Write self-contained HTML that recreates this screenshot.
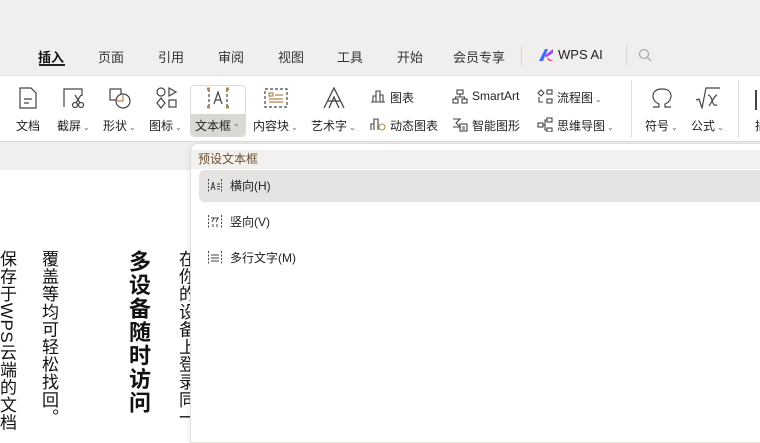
<!DOCTYPE html>
<html><head><meta charset="utf-8"><style>
*{margin:0;padding:0;box-sizing:border-box}
body{width:760px;height:437px;overflow:hidden;position:relative;background:#fff;font-family:"Liberation Sans","Noto Sans CJK SC",sans-serif;color:#222;font-size:12px}
.top{position:absolute;left:0;top:0;width:760px;height:75px;background:#f0efed}
.tab{position:absolute;top:47px;font-size:13px;color:#333}
.ribbon{position:absolute;left:0;top:75px;width:760px;height:67px;background:#fff;border-top:1px solid #e2e1de;border-bottom:1px solid #dcdbd8}
.band{position:absolute;left:0;top:142px;width:760px;height:28px;background:#f0efed}
.lbl{position:absolute;top:117px;font-size:12px;color:#222;white-space:nowrap}
.sm{position:absolute;font-size:12px;white-space:nowrap}
.car{font-size:8px;color:#666;margin-left:2px}
svg{position:absolute}
.v{position:absolute;top:250px;writing-mode:vertical-rl;font-size:17px;line-height:19px;color:#111;white-space:nowrap;letter-spacing:0.6px}
.dd{position:absolute;left:190px;top:143px;width:580px;height:300px;background:#fff;border:1px solid #e0dfdc;border-radius:8px 0 0 0;box-shadow:0 2px 6px rgba(0,0,0,.1)}
.hd{position:absolute;left:0;top:6px;width:100%;height:19px;background:#f2f1ef;font-size:12px;color:#6b4f2e;padding-left:7px;line-height:19px}
.row{position:absolute;left:8px;width:580px;height:32px;border-radius:6px;font-size:12px;line-height:32px;padding-left:31px}
.row svg{left:8px;top:8px}
</style></head><body>
<div class="top"></div>
<div class="tab" style="left:38px;font-weight:bold;color:#111">插入</div>
<div style="position:absolute;left:39px;top:64px;width:26px;height:2px;background:#222"></div>
<div class="tab" style="left:98px">页面</div>
<div class="tab" style="left:158px">引用</div>
<div class="tab" style="left:218px">审阅</div>
<div class="tab" style="left:278px">视图</div>
<div class="tab" style="left:337px">工具</div>
<div class="tab" style="left:397px">开始</div>
<div class="tab" style="left:453px">会员专享</div>
<div style="position:absolute;left:521px;top:47px;width:1px;height:18px;background:#d8d6d2"></div>
<svg style="left:538px;top:48px" width="16" height="14"><path d="M1 13 L7 1 L10 1 L5 13Z" fill="#3b6cf6"/><path d="M6 8 L15 1 L15 5 L9 9Z" fill="#a04ef0"/><path d="M8 9 L15 13 L11 13Z" fill="#f04a7a"/></svg>
<div class="tab" style="left:558px;color:#222">WPS AI</div>
<div style="position:absolute;left:626px;top:45px;width:1px;height:20px;background:#d8d6d2"></div>
<svg style="left:638px;top:48px" width="14" height="14"><circle cx="6" cy="6" r="4.5" fill="none" stroke="#aaa" stroke-width="1.2"/><path d="M9.5 9.5 L13 13" stroke="#aaa" stroke-width="1.2"/></svg>

<div class="ribbon"></div>
<div style="position:absolute;left:190px;top:85px;width:56px;height:52px;border:1px solid #dcdad6;border-radius:4px;background:#fff"></div>
<div style="position:absolute;left:191px;top:114px;width:54px;height:22px;background:#d9d8d4;border-radius:0 0 4px 4px"></div>
<svg style="left:18px;top:87px" width="20" height="22" fill="none" stroke="#444" stroke-width="1.2"><path d="M2 1H13L18 6V21H2Z"/><path d="M6 12H14M6 16H11"/></svg>
<svg style="left:62px;top:87px" width="24" height="22" fill="none" stroke="#444" stroke-width="1.2"><path d="M2 20V2H20V9"/><circle cx="13" cy="18" r="2.5"/><circle cx="19" cy="18" r="2.5"/><path d="M14 16L19 8M18 16L13 8"/></svg>
<svg style="left:108px;top:87px" width="24" height="22" fill="none" stroke="#444" stroke-width="1.2"><rect x="2" y="2" width="11" height="11"/><circle cx="15" cy="14" r="7" fill="#fff"/><path d="M8 14H15V7" stroke="#b5884c"/></svg>
<svg style="left:155px;top:87px" width="24" height="22" fill="none" stroke="#444" stroke-width="1.2"><circle cx="6" cy="5" r="4"/><path d="M14 1L21 5L14 9Z"/><path d="M6 11L10 16L6 21L2 16Z"/><rect x="14" y="13" width="7" height="7"/></svg>
<svg style="left:206px;top:87px" width="24" height="22" fill="none" stroke="#444" stroke-width="1.2"><path d="M3 2V20M21 2V20" stroke-dasharray="3 2"/><rect x="1" y="0.5" width="3" height="3" fill="#b5884c" stroke="none"/><rect x="20" y="0.5" width="3" height="3" fill="#b5884c" stroke="none"/><rect x="1" y="18.5" width="3" height="3" fill="#b5884c" stroke="none"/><rect x="20" y="18.5" width="3" height="3" fill="#b5884c" stroke="none"/><path d="M8 17L12 5L16 17M9.5 13H14.5"/></svg>
<svg style="left:264px;top:87px" width="24" height="22" fill="none" stroke="#444" stroke-width="1.2"><rect x="1" y="2" width="22" height="18" stroke-dasharray="3 2"/><path d="M5 6H9V9H5ZM11 8H19M5 12H19M5 15H19" stroke="#b5884c"/></svg>
<svg style="left:322px;top:87px" width="24" height="22" fill="none" stroke="#444" stroke-width="1.3"><path d="M2 21L12 1L22 21M6 14H18"/><path d="M7 21L12 10L17 21"/></svg>
<div class="lbl" style="left:16px">文档</div>
<div class="lbl" style="left:57px">截屏<span class="car">⌄</span></div>
<div class="lbl" style="left:103px">形状<span class="car">⌄</span></div>
<div class="lbl" style="left:149px">图标<span class="car">⌄</span></div>
<div class="lbl" style="left:195px">文本框<span class="car">⌃</span></div>
<div class="lbl" style="left:253px">内容块<span class="car">⌄</span></div>
<div class="lbl" style="left:311px">艺术字<span class="car">⌄</span></div>
<svg style="left:370px;top:89px" width="16" height="14" fill="none" stroke="#444" stroke-width="1.1"><path d="M1 13H15M3 13V7H6V13M6 13V2H10V13M10 13V6H13V13"/></svg>
<div class="sm" style="left:390px;top:89px">图表</div>
<svg style="left:370px;top:117px" width="16" height="14" fill="none" stroke="#444" stroke-width="1.1"><path d="M1 13V7H4V13M4 13V2H8V13"/><circle cx="12" cy="10" r="3" stroke="#b5884c"/></svg>
<div class="sm" style="left:390px;top:117px">动态图表</div>
<svg style="left:452px;top:89px" width="16" height="15" fill="none" stroke="#444" stroke-width="1.1"><rect x="5" y="1" width="6" height="4"/><rect x="1" y="10" width="5" height="4"/><rect x="10" y="10" width="5" height="4"/><path d="M8 5V8M3.5 10V8H12.5V10"/></svg>
<div class="sm" style="left:472px;top:89px">SmartArt</div>
<svg style="left:452px;top:117px" width="16" height="15" fill="none" stroke="#444" stroke-width="1.1"><path d="M1 2H8L4 6L8 10H1"/><rect x="8" y="7" width="7" height="7"/><path d="M10 10H13M10 12H13"/></svg>
<div class="sm" style="left:472px;top:117px">智能图形</div>
<svg style="left:537px;top:89px" width="17" height="15" fill="none" stroke="#444" stroke-width="1.1"><path d="M1 4L4 1L7 4L4 7Z"/><rect x="10" y="1" width="5" height="4"/><rect x="10" y="10" width="5" height="4"/><path d="M2 8V13H6"/></svg>
<div class="sm" style="left:557px;top:89px">流程图<span class="car">⌄</span></div>
<svg style="left:537px;top:117px" width="17" height="15" fill="none" stroke="#444" stroke-width="1.1"><rect x="1" y="6" width="5" height="4"/><rect x="10" y="1" width="5" height="4"/><rect x="10" y="11" width="5" height="4"/><path d="M6 8H8V3H10M8 8V13H10"/></svg>
<div class="sm" style="left:557px;top:117px">思维导图<span class="car">⌄</span></div>
<div style="position:absolute;left:631px;top:80px;width:1px;height:58px;background:#e2e0dc"></div>
<svg style="left:650px;top:87px" width="24" height="22" fill="none" stroke="#444" stroke-width="1.2"><path d="M3 20H9V17C4 15 3 11 3 9C3 4 7 2 12 2C17 2 21 4 21 9C21 11 20 15 15 17V20H21"/></svg>
<svg style="left:695px;top:87px" width="26" height="22" fill="none" stroke="#444" stroke-width="1.2"><path d="M1 13L4 12L7 21L11 1H25"/><path d="M13 8C15 8 16 10 17 13C18 17 19 19 22 18M22 8C19 9 17 15 14 19"/></svg>
<div class="lbl" style="left:645px">符号<span class="car">⌄</span></div>
<div class="lbl" style="left:691px">公式<span class="car">⌄</span></div>
<div style="position:absolute;left:738px;top:80px;width:1px;height:58px;background:#e2e0dc"></div>
<div style="position:absolute;left:755px;top:90px;width:2px;height:20px;background:#444"></div>
<div class="lbl" style="left:755px">插</div>

<div class="band"></div>
<div class="v" style="left:-3px">保存于WPS云端的文档</div>
<div class="v" style="left:39px">覆盖等均可轻松找回。</div>
<div class="v" style="left:126px;font-size:22px;line-height:24px;font-weight:bold;letter-spacing:1.5px">多设备随时访问</div>
<div class="v" style="left:176px">在你的设备上登录同一</div>

<div class="dd">
<div class="hd">预设文本框</div>
<div class="row" style="top:26px;background:#e5e4e2"><svg width="16" height="16" fill="none" stroke="#444" stroke-width="1"><path d="M1.5 1V15M14.5 1V15" stroke-dasharray="2 1.5"/><path d="M4 12L6 4L8 12M4.7 9.5H7.3M10 6H13M10 8.5H13M10 11H13"/></svg>横向(H)</div>
<div class="row" style="top:62px"><svg width="16" height="16" fill="none" stroke="#444" stroke-width="1"><path d="M1.5 1V15M14.5 1V15" stroke-dasharray="2 1.5"/><path d="M4 4H12M5 8L7 4M9 8L11 4M6 10V13M10 10V13"/></svg>竖向(V)</div>
<div class="row" style="top:98px"><svg width="16" height="16" fill="none" stroke="#444" stroke-width="1"><path d="M1.5 1V15M14.5 1V15" stroke-dasharray="2 1.5"/><path d="M4 5H12M4 8H12M4 11H12"/></svg>多行文字(M)</div>
</div>
</body></html>
